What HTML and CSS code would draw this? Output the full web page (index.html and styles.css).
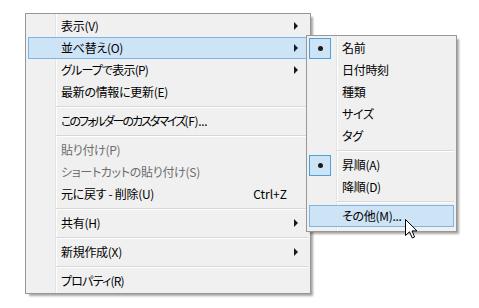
FILE: index.html
```html
<!DOCTYPE html>
<html lang="ja">
<head>
  <meta charset="UTF-8">
  <meta name="viewport" content="width=device-width, initial-scale=1.0">
  <title>コンテキストメニュー</title>
  <link rel="stylesheet" href="styles.css">
</head>
<body>
  <div class="screen">
    <!-- Main context menu -->
    <div class="menu main-menu">
      <div class="item"><span class="gutter"></span><span class="label">表示(V)</span><span class="key"></span><span class="arrow"></span></div>
      <div class="item hot"><span class="gutter"></span><span class="label">並べ替え(O)</span><span class="key"></span><span class="arrow"></span></div>
      <div class="item"><span class="gutter"></span><span class="label kana">グループで表示(P)</span><span class="key"></span><span class="arrow"></span></div>
      <div class="item"><span class="gutter"></span><span class="label">最新の情報に更新(E)</span></div>
      <div class="sep"></div>
      <div class="item"><span class="gutter"></span><span class="label"><span class="tight">このフォルダーのカスタマイズ</span>(F)...</span></div>
      <div class="sep"></div>
      <div class="item disabled"><span class="gutter"></span><span class="label">貼り付け(P)</span></div>
      <div class="item disabled"><span class="gutter"></span><span class="label">ショートカットの貼り付け(S)</span></div>
      <div class="item"><span class="gutter"></span><span class="label">元に戻す - 削除(U)</span><span class="key">Ctrl+Z</span></div>
      <div class="sep"></div>
      <div class="item"><span class="gutter"></span><span class="label">共有(H)</span><span class="key"></span><span class="arrow"></span></div>
      <div class="sep"></div>
      <div class="item"><span class="gutter"></span><span class="label">新規作成(X)</span><span class="key"></span><span class="arrow"></span></div>
      <div class="sep"></div>
      <div class="item"><span class="gutter"></span><span class="label kana">プロパティ(R)</span></div>
    </div>

    <!-- Sort submenu -->
    <div class="menu sub-menu">
      <div class="item"><span class="gutter"><span class="check"></span></span><span class="label">名前</span></div>
      <div class="item"><span class="gutter"></span><span class="label">日付時刻</span></div>
      <div class="item"><span class="gutter"></span><span class="label">種類</span></div>
      <div class="item"><span class="gutter"></span><span class="label">サイズ</span></div>
      <div class="item"><span class="gutter"></span><span class="label">タグ</span></div>
      <div class="sep"></div>
      <div class="item"><span class="gutter"><span class="check"></span></span><span class="label">昇順(A)</span></div>
      <div class="item"><span class="gutter"></span><span class="label">降順(D)</span></div>
      <div class="sep"></div>
      <div class="item hot"><span class="gutter"></span><span class="label">その他(M)...</span></div>
    </div>

    <svg class="cursor" width="13" height="20" viewBox="0 0 13 20">
      <path d="M0.5 0.5 V16.5 L4.5 12.8 L7.3 19 L9.6 18 L7 11.9 H12 Z" fill="#fff" stroke="#000" stroke-width="1" stroke-linejoin="miter"/>
    </svg>
  </div>
</body>
</html>
```

FILE: styles.css
```css
* {
  margin: 0;
  padding: 0;
  box-sizing: border-box;
}

body {
  background: #fff;
  font-family: "Noto Sans CJK JP", "Noto Sans", sans-serif;
  font-size: 12px;
  font-feature-settings: "palt";
  color: #000;
}

.screen {
  position: relative;
  width: 479px;
  height: 308px;
  overflow: hidden;
  padding: 13px 0 0 25px;
}

/* Menu frame with the icon gutter line drawn in the background */
.menu {
  display: flex;
  flex-direction: column;
  border: 1px solid #979797;
  background:
    linear-gradient(to right,
      transparent 29px, #e2e3e3 29px, #e2e3e3 30px,
      #fff 30px, #fff 31px, transparent 31px),
    #f0f0f0;
  box-shadow: 3px 3px 2px -1px rgba(0, 0, 0, 0.35);
}

.main-menu {
  width: 286px;
  padding: 1px 2px;
}

.sub-menu {
  position: absolute;
  left: 306px;
  top: 35px;
  width: 151px;
  padding: 1px 2px 4px;
}

.item {
  display: grid;
  grid-template-columns: 27px 1fr auto 20px;
  align-items: center;
  height: 22px;
  border: 1px solid transparent;
  line-height: 20px;
  white-space: nowrap;
}

.item .label {
  padding-left: 5px;
  letter-spacing: -0.3px;
}

.item .label.kana {
  letter-spacing: -0.8px;
}

.item .tight {
  letter-spacing: -2px;
}

.item .key {
  text-align: right;
}

.item.hot {
  background: #cde4f7;
  border-color: #7fb4e4;
}

.item.disabled {
  color: #6d6d6d;
}

.gutter {
  height: 20px;
  display: flex;
  align-items: center;
}

.check {
  display: flex;
  align-items: center;
  justify-content: center;
  width: 22px;
  height: 21px;
  margin-left: -1px;
  background: #cde4f7;
  border: 1px solid #4ea0dc;
}

.check::after {
  content: "";
  width: 5px;
  height: 5px;
  border-radius: 50%;
  background: #1a1a1a;
}

.arrow {
  justify-self: start;
  margin-left: 7px;
  width: 0;
  height: 0;
  border-top: 4px solid transparent;
  border-bottom: 4px solid transparent;
  border-left: 4px solid #1a1a1a;
}

.sep {
  height: 1px;
  margin: 3px 0 3px 28px;
  background: #d7d7d7;
  box-shadow: 0 1px 0 #fff;
}

.cursor {
  position: absolute;
  left: 405px;
  top: 219px;
}
```
